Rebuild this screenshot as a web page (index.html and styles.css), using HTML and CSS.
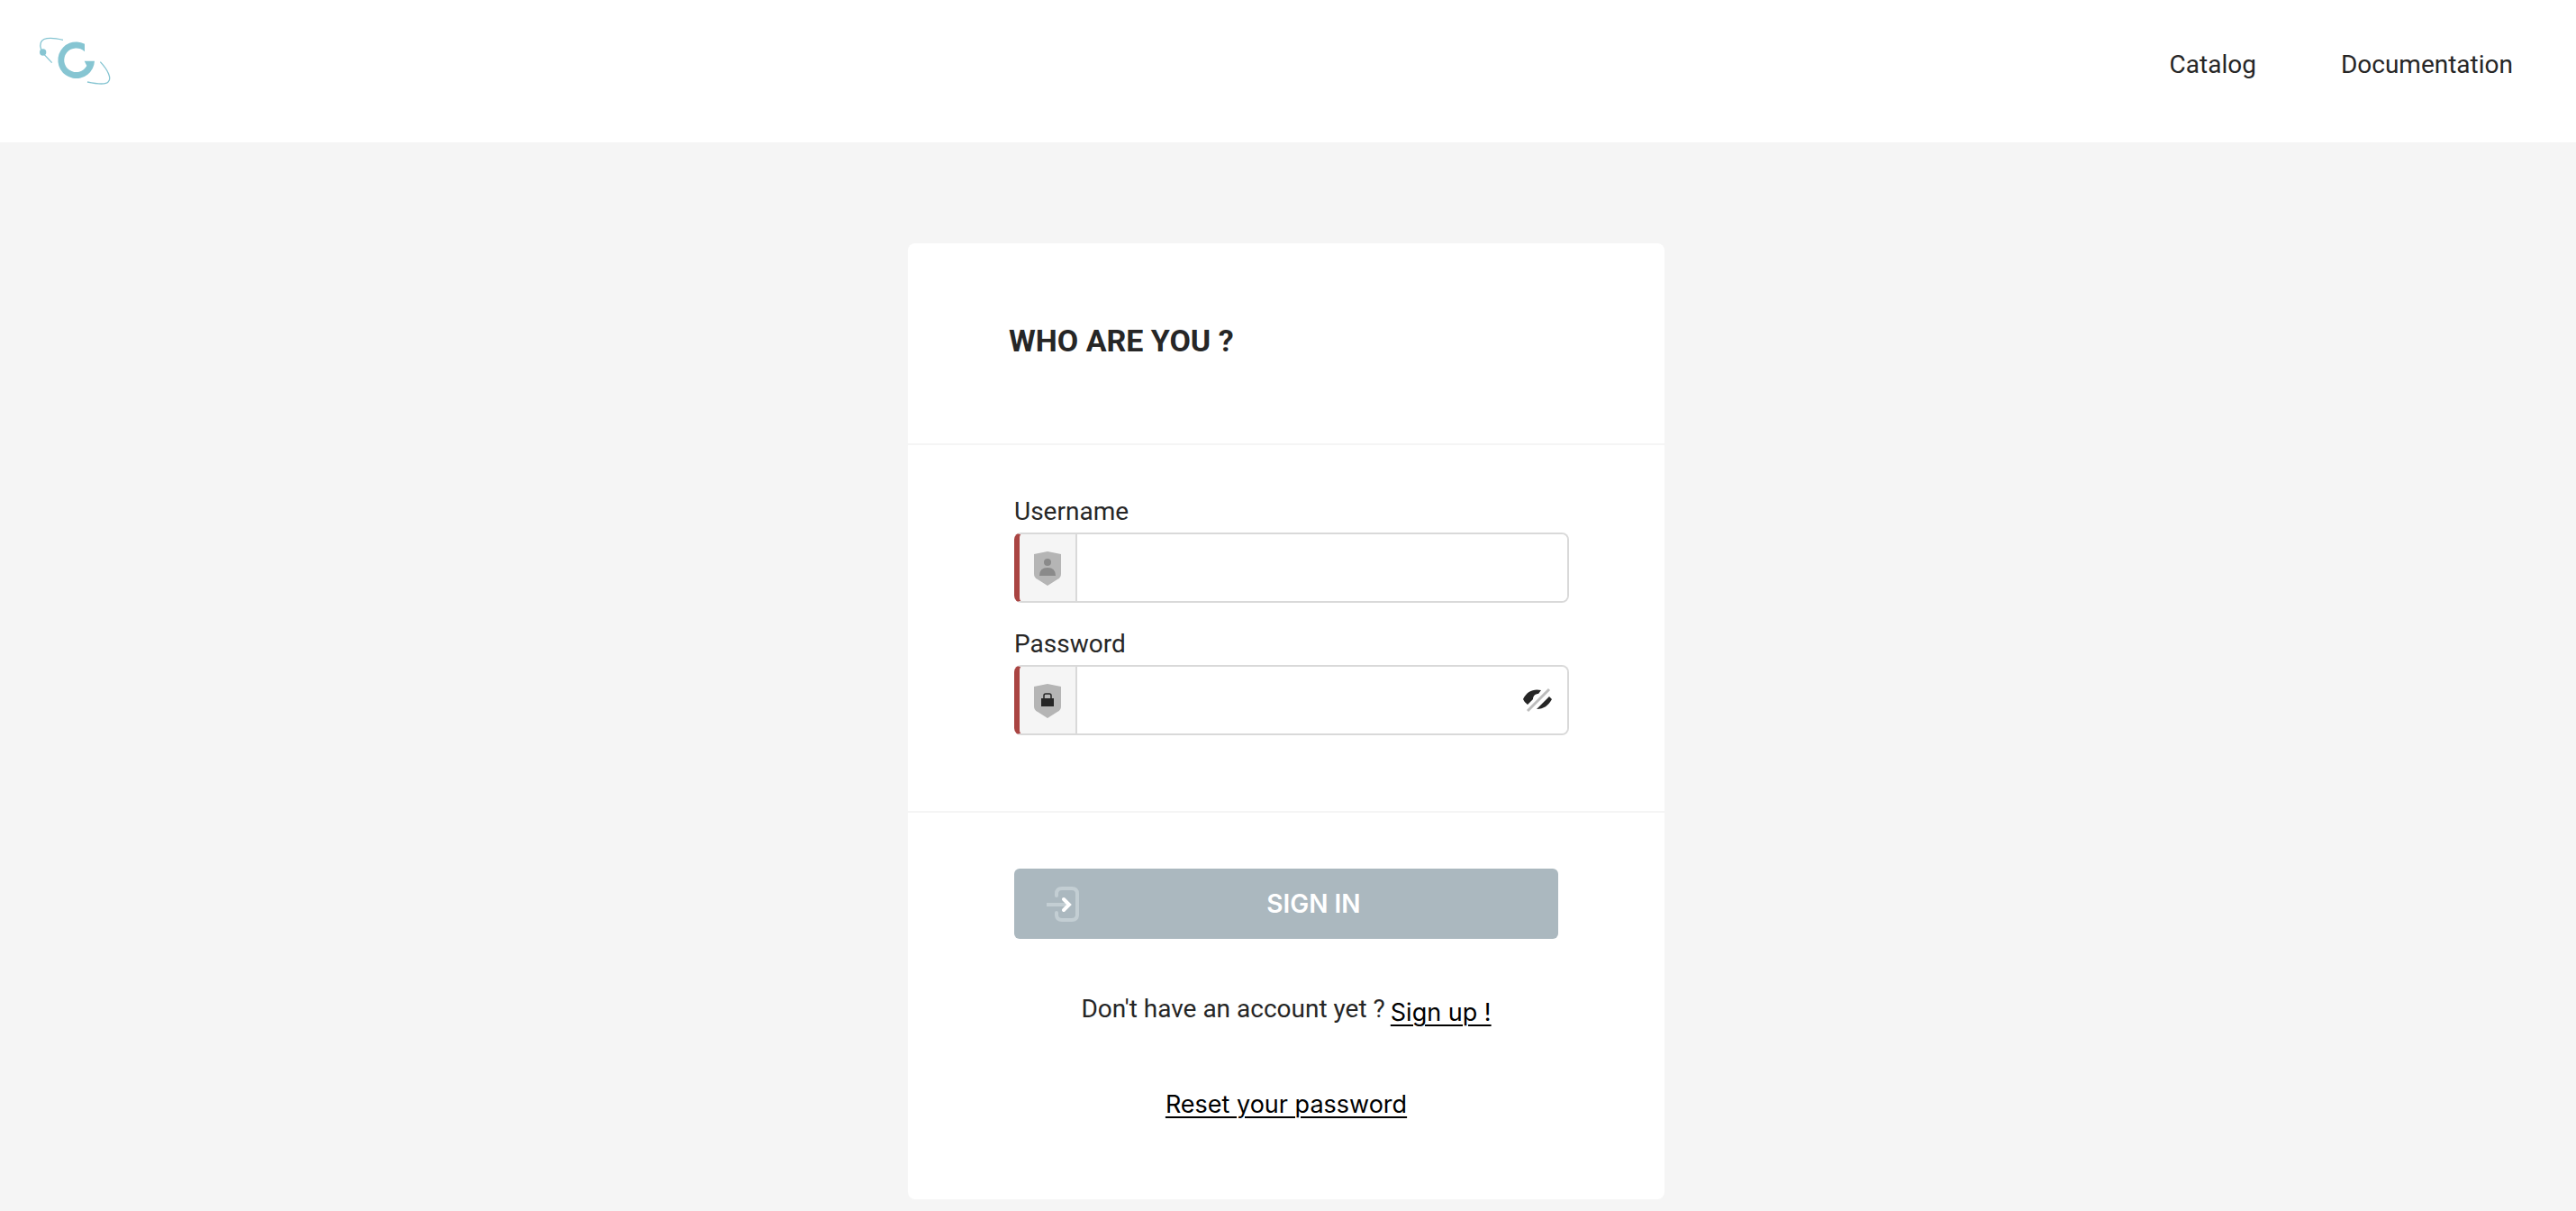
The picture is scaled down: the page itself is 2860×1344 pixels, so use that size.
FILE: index.html
```html
<!DOCTYPE html>
<html lang="en">
<head>
<meta charset="utf-8">
<title>Sign in</title>
<link rel="stylesheet" href="styles.css">
</head>
<body>
<header class="topbar">
  <a class="logo" href="#" aria-label="Home">
    <svg viewBox="0 0 390 300" width="130" height="100" fill="none">
      <path fill="#86c5d2" d="M222 86A61 61 0 1 0 255 143H221L229 159A40 40 0 1 1 222 112Z"/>
      <g stroke="#86c5d2" stroke-width="4">
        <path d="M150 73C115 65 83 63 76 82C73 90 74 97 77 105"/>
        <path d="M84 118L113 149"/>
        <path d="M274 146C300 174 312 200 301 212C294 222 260 219 231 213"/>
      </g>
      <circle cx="83" cy="114" r="11" fill="#86c5d2"/>
    </svg>
  </a>
  <nav class="nav">
    <a href="#">Catalog</a>
    <a href="#">Documentation</a>
  </nav>
</header>
<main class="page">
  <form class="card">
    <h1 class="title">WHO ARE YOU ?</h1>
    <div class="fields">
      <label class="label" for="username">Username</label>
      <div class="field">
        <span class="addon">
          <svg viewBox="0 0 30 38" width="30" height="38"><path fill="#b5b5b5" d="M0 3L15 0L30 3V25Q30 29 26 31L15 38L4 31Q0 29 0 25Z"/><circle cx="15" cy="12" r="4" fill="#8a8a8a"/><path fill="#8a8a8a" d="M6 27Q6 18 15 18T24 27Z"/></svg>
        </span>
        <input class="input" id="username" type="text">
      </div>
      <label class="label" for="password">Password</label>
      <div class="field">
        <span class="addon">
          <svg viewBox="0 0 30 38" width="30" height="38"><path fill="#b5b5b5" d="M0 3L15 0L30 3V25Q30 29 26 31L15 38L4 31Q0 29 0 25Z"/><path fill="#262626" d="M8 16H22V25H8Z"/><path fill="none" stroke="#262626" stroke-width="1.5" d="M11 16V13Q11 11 13 11H17Q19 11 19 13V16"/></svg>
        </span>
        <input class="input" id="password" type="password">
        <button class="reveal" type="button" aria-label="Show password">
          <svg viewBox="0 0 34 28" width="34" height="28"><path fill="#262626" d="M1 13C5 4 13 1 21 3L18 7C15 7 12 9 12 13L6 19Q2 16 1 13ZM30 10L33 13C29 20 24 24 16 24Z"/><path stroke="#bdbdbd" stroke-width="3" d="M6 26L30 2"/></svg>
        </button>
      </div>
    </div>
    <div class="actions">
      <button class="submit" type="submit">
        <svg viewBox="0 0 37 39" width="37" height="39" fill="none"><path stroke="#c3ced3" stroke-width="4" d="M0 20H22"/><path stroke="#c3ced3" stroke-width="4" stroke-linecap="round" d="M11 10V8Q11 2 17 2H28Q34 2 34 8V31Q34 37 28 37H17Q11 37 11 31V29"/><path stroke="#fff" stroke-width="4" stroke-linecap="round" d="M19 14L25 20L19 26"/></svg>
        <span>SIGN IN</span>
      </button>
      <p class="signup">Don't have an account yet ? <a class="link" href="#">Sign up !</a></p>
      <a class="link reset" href="#">Reset your password</a>
    </div>
  </form>
</main>
</body>
</html>
```
FILE: styles.css
```css
* { box-sizing: border-box; }

body {
  margin: 0;
  min-height: 100vh;
  background: #f5f5f5;
  color: #262626;
  font: 28px/36px Roboto, sans-serif;
}

.topbar {
  display: flex;
  justify-content: space-between;
  align-items: flex-start;
  padding: 20px 70px 38px 20px;
  background: #fff;
}

.logo, .logo svg { display: block; }

.nav {
  display: flex;
  gap: 94px;
  padding-top: 34px;
}

.nav a { color: inherit; text-decoration: none; }

.page { padding: 112px 4px 12px 0; }

.card {
  width: 100%;
  max-width: 840px;
  margin: 0 auto;
  border-radius: 8px;
  background: #fff;
}

.title {
  margin: 0;
  padding: 88px 112px 94px;
  border-bottom: 2px solid #f5f5f5;
  font: 700 34px/40px Roboto, sans-serif;
}

.fields {
  padding: 56px 106px 84px 118px;
  border-bottom: 2px solid #f5f5f5;
}

.label { display: block; margin-bottom: 5px; }

.field {
  display: flex;
  height: 78px;
  overflow: hidden;
  border: 2px solid #d9d9d9;
  border-left: 6px solid #a94442;
  border-radius: 8px;
}

.field + .label { margin-top: 28px; }

.addon {
  display: flex;
  flex: 0 0 64px;
  align-items: center;
  justify-content: center;
  padding-top: 2px;
  border-right: 2px solid #d9d9d9;
  background: #f5f5f5;
}

.input {
  flex: 1;
  min-width: 0;
  padding: 0 20px;
  border: 0;
  outline: 0;
  background: #fff;
  font: inherit;
}

.reveal {
  display: flex;
  align-items: center;
  padding: 0 16px;
  border: 0;
  background: #fff;
}

.actions {
  display: flex;
  flex-direction: column;
  align-items: center;
  padding: 62px 118px 85px;
}

.submit {
  display: flex;
  align-items: center;
  width: 100%;
  height: 78px;
  padding: 0 12px 0 36px;
  border: 0;
  border-radius: 6px;
  background: #abb8bf;
  color: #fff;
  font: 600 28px/36px Inter, sans-serif;
}

.submit span { flex: 1; }

.signup {
  display: flex;
  gap: 6px;
  margin: 60px 0 0;
}

.link {
  color: #000;
  font: 27px/40px Inter, sans-serif;
  text-underline-offset: 4px;
  text-decoration-thickness: 2px;
}

.signup .link { padding-top: 2px; }

.reset { margin-top: 62px; }
```
